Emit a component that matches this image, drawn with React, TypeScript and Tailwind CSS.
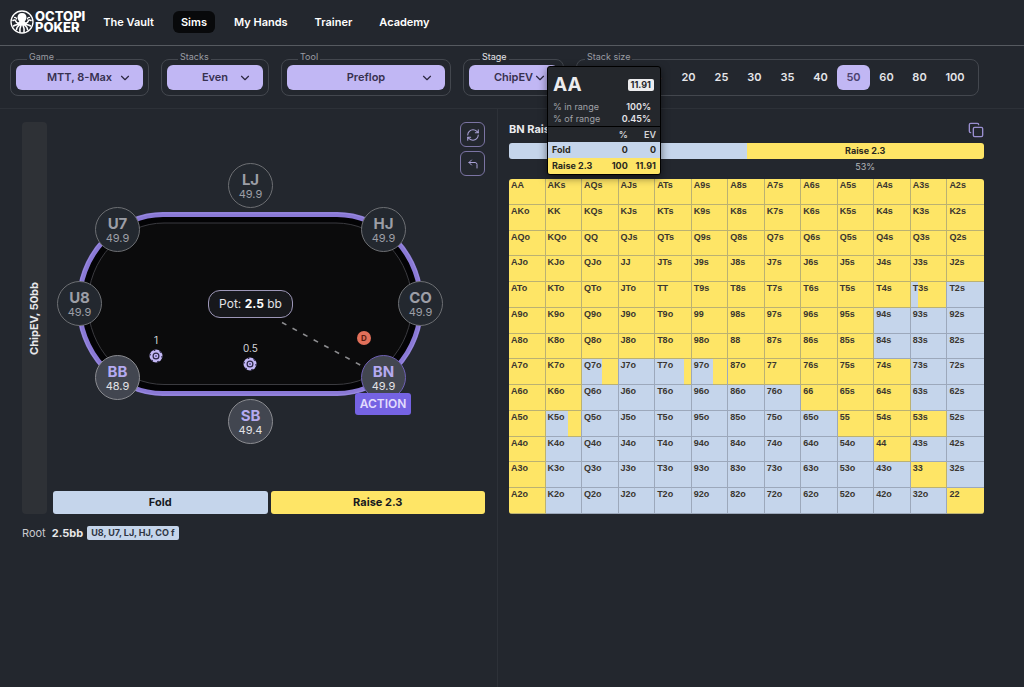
import { ChevronDown, Copy, CornerUpLeft, RefreshCw } from "lucide-react";

const RANKS = ["A", "K", "Q", "J", "T", "9", "8", "7", "6", "5", "4", "3", "2"];

const RAISE_COLOR = "#fee566";
const FOLD_COLOR = "#c5d5eb";

// "R" raises always, "F" folds always, "m" is looked up in MIXED_FOLD.
const STRATEGY = [
  "RRRRRRRRRRRRR",
  "RRRRRRRRRRRRR",
  "RRRRRRRRRRRRR",
  "RRRRRRRRRRRRR",
  "RRRRRRRRRRRmF",
  "RRRRRRRRRRFFF",
  "RRRRRRRRRRFFF",
  "RRmFmmRRRRRFF",
  "RRFFFFFFRRRFF",
  "RmFFFFFFFRRRF",
  "RFFFFFFFFFRFF",
  "RFFFFFFFFFFRF",
  "RFFFFFFFFFFFR",
];

const MIXED_FOLD: Record<string, number> = {
  T3s: 20,
  Q7o: 56,
  T7o: 81,
  "97o": 60,
  K5o: 62,
};

function handName(row: number, col: number) {
  if (row === col) return RANKS[row] + RANKS[col];
  return row < col ? `${RANKS[row]}${RANKS[col]}s` : `${RANKS[col]}${RANKS[row]}o`;
}

function cellBackground(row: number, col: number) {
  const action = STRATEGY[row][col];
  if (action === "R") return RAISE_COLOR;
  if (action === "F") return FOLD_COLOR;
  const fold = MIXED_FOLD[handName(row, col)];
  return `linear-gradient(to right, ${FOLD_COLOR} ${fold}%, ${RAISE_COLOR} ${fold}%)`;
}

function Logo() {
  return (
    <a href="#" className="flex items-center gap-px text-white" aria-label="Octopi Poker">
      <svg viewBox="0 0 48 48" className="size-6" fill="none" stroke="currentColor" strokeLinecap="round">
        <circle cx="24" cy="24" r="22" strokeWidth="2.6" />
        <path
          d="M24 6c-6 0-9 4.200-9 8.800 0 3.600 2.400 5.800 3.400 8.200.6 1.600.2 4 1.600 5.600h8c1.400-1.600 1-4 1.600-5.600 1-2.400 3.400-4.600 3.400-8.200C33 10.200 30 6 24 6z"
          fill="currentColor"
          stroke="none"
        />
        <path
          strokeWidth="3.200"
          d="M20 25c-3 2-7 1-8-2s-3-4-6-2M28 25c3 2 7 1 8-2s3-4 6-2M20 27c-4 3-9 2-13 5M28 27c4 3 9 2 13 5M21 28c-3 4-8 4-8 11M27 28c3 4 8 4 8 11M23 28c-1 5-5 8-3 16M25 28c1 5 5 8 3 16"
        />
        <path strokeWidth="2.400" d="M9 15c2-1 4 1 4 3M39 15c-2-1-4 1-4 3" />
      </svg>
      <span className="flex flex-col text-[13px] leading-[11px] font-extrabold">
        <span>OCTOPI</span>
        <span>POKER</span>
      </span>
    </a>
  );
}

const NAV = ["The Vault", "Sims", "My Hands", "Trainer", "Academy"];

function Header() {
  return (
    <header className="flex h-[46px] items-center gap-[10px] border-b border-[#565a60] px-[10px] pb-0.5">
      <Logo />
      <nav className="flex gap-[11px]">
        {NAV.map((item) => (
          <a
            key={item}
            href="#"
            className={
              item === "Sims"
                ? "rounded-md bg-[#08090b] px-2 text-[11px] leading-[22px] font-semibold text-white"
                : "rounded-md px-2 text-[11px] leading-[22px] font-semibold text-white"
            }
          >
            {item}
          </a>
        ))}
      </nav>
    </header>
  );
}

function Picker({ id, label, value, width, active }: { id: string; label: string; value: string; width: string; active?: boolean }) {
  return (
    <div className={`relative rounded-lg border border-[#43474e] p-[5px] ${width}`}>
      <label
        htmlFor={id}
        className={`absolute -top-[9px] left-4 bg-[#23272e] px-0.5 text-[9px] leading-3 ${active ? "text-[#e4e4e8]" : "text-[#9a9ca3]"}`}
      >
        {label}
      </label>
      <select
        id={id}
        className="block h-[25px] w-full appearance-none rounded-md bg-[#c1b7f4] text-center text-[11px] font-semibold text-[#37314f] [text-align-last:center]"
      >
        <option>{value}</option>
      </select>
      <ChevronDown className="pointer-events-none absolute top-[11px] right-4 size-3.5 text-[#2c2740]" />
    </div>
  );
}

const STACK_SIZES = [8, 10, 15, 20, 25, 30, 35, 40, 50, 60, 80, 100];

function Filters() {
  return (
    <div className="flex gap-3 border-b border-[#2d3138] px-[10px] pt-[13px] pb-3">
      <Picker id="game" label="Game" value="MTT, 8-Max" width="w-[139px]" />
      <Picker id="stacks" label="Stacks" value="Even" width="w-[108px]" />
      <Picker id="tool" label="Tool" value="Preflop" width="w-[170px]" />
      <Picker id="stage" label="Stage" value="ChipEV" width="w-[101px]" active />
      <div role="group" aria-labelledby="stack-size" className="relative flex rounded-lg border border-[#43474e] p-[5px] pr-1">
        <span id="stack-size" className="absolute -top-[9px] left-2 bg-[#23272e] px-0.5 text-[9px] leading-3 text-[#9a9ca3]">
          Stack size
        </span>
        {STACK_SIZES.map((size) => (
          <button
            key={size}
            type="button"
            aria-pressed={size === 50}
            className={
              size === 50
                ? "h-[25px] w-[33px] rounded-md bg-[#c1b7f4] text-[11px] font-semibold text-[#4b4270]"
                : size === 8
                  ? "h-[25px] w-6 text-[11px] font-semibold text-[#e6e6ea]"
                  : size === 100
                    ? "h-[25px] w-[38px] text-[11px] font-semibold text-[#e6e6ea]"
                    : "h-[25px] w-[33px] text-[11px] font-semibold text-[#e6e6ea]"
            }
          >
            {size}
          </button>
        ))}
      </div>
    </div>
  );
}

type SeatInfo = { name: string; stack: string; place: string; state: "folded" | "live" | "acting" };

const SEATS: SeatInfo[] = [
  { name: "LJ", stack: "49.9", place: "left-[171px] top-[1px]", state: "folded" },
  { name: "HJ", stack: "49.9", place: "left-[304px] top-[45px]", state: "folded" },
  { name: "CO", stack: "49.9", place: "left-[341px] top-[119px]", state: "folded" },
  { name: "BN", stack: "49.9", place: "left-[304px] top-[193px]", state: "acting" },
  { name: "SB", stack: "49.4", place: "left-[171px] top-[237px]", state: "live" },
  { name: "BB", stack: "48.9", place: "left-[38px] top-[193px]", state: "live" },
  { name: "U8", stack: "49.9", place: "left-0 top-[119px]", state: "folded" },
  { name: "U7", stack: "49.9", place: "left-[38px] top-[45px]", state: "folded" },
];

const SEAT_STYLE = {
  folded: "border-[#6d6f73] bg-[#23282f] text-[#9c9ea6]",
  live: "border-[#8b8c91] bg-[#424650] text-[#e2e2e6]",
  acting: "border-[#6e60b4] bg-[#424650] text-[#e2e2e6]",
};

function Seat({ seat }: { seat: SeatInfo }) {
  return (
    <div className={`absolute flex size-[45px] flex-col items-center justify-center rounded-full border ${seat.place} ${SEAT_STYLE[seat.state]}`}>
      <span className={`text-[15px] leading-4 font-bold ${seat.state === "folded" ? "" : "text-[#b5aaf0]"}`}>{seat.name}</span>
      <span className="text-[11px] leading-3">{seat.stack}</span>
    </div>
  );
}

function Chip() {
  return (
    <svg viewBox="0 0 28 28" className="size-3.5">
      <circle cx="14" cy="14" r="13" fill="#c3b8f5" />
      <circle cx="14" cy="14" r="12" fill="none" stroke="#2b2545" strokeWidth="2.400" strokeDasharray="3.400 9.160" />
      <circle cx="14" cy="14" r="5.800" fill="#c3b8f5" stroke="#2b2545" strokeWidth="2.400" />
      <circle cx="14" cy="14" r="2.200" fill="#6c5fa8" />
    </svg>
  );
}

function PokerTable() {
  return (
    <div className="relative h-[284px] w-[387px]">
      <svg viewBox="0 0 387 284" className="absolute inset-0 size-full" fill="none">
        <rect x="22" y="52.500" width="342" height="179" rx="84" ry="89.500" fill="#030305" stroke="#8a79d6" strokeWidth="5" />
        <rect x="20.500" y="51" width="345" height="182" rx="85.500" ry="91" stroke="#a497e6" strokeOpacity=".6" />
        <rect x="31" y="61" width="324" height="161.500" rx="76" ry="80.700" fill="#0b0b0c" stroke="#3b3b40" />
        <path d="M225 160.500 305 204" stroke="#8d8d90" strokeWidth="1.600" strokeDasharray="5 7" />
      </svg>
      {SEATS.map((seat) => (
        <Seat key={seat.name} seat={seat} />
      ))}
      <div className="absolute top-[128px] left-[151px] flex h-7 w-[85px] items-center justify-center rounded-[12px] border border-[#9d97b8] bg-[#17181c] text-[12px] text-[#e2e2e6]">
        <span>
          Pot: <b className="font-bold text-white">2.5</b> bb
        </span>
      </div>
      <div className="absolute top-[172px] left-[92px] flex flex-col items-center gap-[3px] text-[10px] leading-3 text-[#d6d6da]">
        <span>1</span>
        <Chip />
      </div>
      <div className="absolute top-[180px] left-[186px] flex flex-col items-center gap-[3px] text-[10px] leading-3 text-[#d6d6da]">
        <span>0.5</span>
        <Chip />
      </div>
      <div className="absolute top-[169px] left-[300px] flex size-3.5 items-center justify-center rounded-full bg-[#e2705a] text-[8px] font-bold text-[#5a1d12]">
        D
      </div>
      <div className="absolute top-[231px] left-[298px] flex h-[22px] w-14 items-center justify-center rounded-[3px] bg-[#7563e3] text-[12px] font-semibold text-[#e2dcfd]">
        ACTION
      </div>
    </div>
  );
}

function TablePanel() {
  return (
    <section className="border-r border-[#2d3138] pt-[13px] pr-3 pl-[22px]">
      <div className="flex gap-1.5">
        <div className="flex w-[25px] items-center justify-center rounded-sm bg-[#2e3136]">
          <span className="rotate-180 text-[11px] font-bold text-[#e8e8ea] [writing-mode:vertical-rl]">ChipEV, 50bb</span>
        </div>
        <div className="flex flex-1 flex-col gap-1">
          <div className="flex h-[365px] gap-3">
            <div className="flex flex-1 justify-center pt-10">
              <PokerTable />
            </div>
            <div className="flex flex-col gap-1">
              <button type="button" aria-label="Reset hand" className="flex size-[25px] items-center justify-center rounded-md border border-[#7b74a3] text-[#a9a1d6]">
                <RefreshCw className="size-3.5" strokeWidth={1.8} />
              </button>
              <button type="button" aria-label="Step back" className="flex size-[25px] items-center justify-center rounded-md border border-[#7b74a3] text-[#a9a1d6]">
                <CornerUpLeft className="size-3" strokeWidth={2} />
              </button>
            </div>
          </div>
          <div className="grid grid-cols-2 gap-[3px] text-[11px] font-bold text-[#17191f]">
            <button type="button" className="h-[23px] rounded-[3px] bg-[#c5d5eb]">
              Fold
            </button>
            <button type="button" className="h-[23px] rounded-[3px] bg-[#fee566]">
              Raise 2.3
            </button>
          </div>
        </div>
      </div>
      <div className="flex items-center pt-3 text-[11px] leading-[14px]">
        <span className="mr-1.5 text-[#c9cace]">Root</span>
        <span className="mr-1 font-bold text-[#e8e8ea]">2.5bb</span>
        <a href="#" className="rounded-xs bg-[#c5d5eb] px-1 text-[9px] font-bold text-[#2d3442]">
          U8, U7, LJ, HJ, CO f
        </a>
      </div>
    </section>
  );
}

function HandTooltip() {
  return (
    <div
      role="tooltip"
      className="absolute bottom-full left-[38px] z-10 mb-1 w-[114px] overflow-hidden rounded-[3px] border border-black bg-[#24272c] text-[9px] shadow-[0_3px_8px_rgba(0,0,0,0.5)]"
    >
      <div className="flex items-center justify-between pt-[5px] pr-1.5 pl-[5px]">
        <span className="text-[19px] leading-[26px] font-bold text-[#ececee]">AA</span>
        <span className="rounded-[2px] bg-[#ececee] px-[3px] leading-3 font-bold text-[#24272c]">11.91</span>
      </div>
      <dl className="border-b border-black pt-[3px] pr-[9px] pb-px pl-[5px]">
        <div className="flex justify-between leading-3">
          <dt className="text-[#a0a2a8]">% in range</dt>
          <dd className="font-semibold text-[#e4e4e8]">100%</dd>
        </div>
        <div className="flex justify-between leading-3">
          <dt className="text-[#a0a2a8]">% of range</dt>
          <dd className="font-semibold text-[#e4e4e8]">0.45%</dd>
        </div>
      </dl>
      <table className="w-full border-collapse text-right font-bold text-[#2a2820]">
        <thead>
          <tr className="h-[15px] text-[#d4d4d8]">
            <th className="p-0" aria-label="Action" />
            <th className="p-0 font-semibold">%</th>
            <th className="p-0 pr-1 font-semibold">EV</th>
          </tr>
        </thead>
        <tbody>
          <tr className="h-4 bg-[#c5d5eb]">
            <th className="p-0 pl-1 text-left">Fold</th>
            <td className="p-0">0</td>
            <td className="p-0 pr-1">0</td>
          </tr>
          <tr className="h-4 bg-[#fee566]">
            <th className="p-0 pl-1 text-left">Raise 2.3</th>
            <td className="p-0">100</td>
            <td className="p-0 pr-1">11.91</td>
          </tr>
        </tbody>
      </table>
    </div>
  );
}

function HandMatrix() {
  return (
    <div className="relative">
      <div className="overflow-hidden rounded-[3px]">
        <table className="h-[335px] w-full table-fixed border-separate border-spacing-0">
          <tbody>
            {RANKS.map((rank, row) => (
              <tr key={rank}>
                {RANKS.map((other, col) => (
                  <td
                    key={other}
                    className="border-r border-b border-[#6b7280]/45 p-0 pl-0.5 align-top font-['Liberation_Sans',Arial,sans-serif] text-[9px] leading-3 font-bold text-[#3a3630] last:border-r-0"
                    style={{ background: cellBackground(row, col) }}
                  >
                    {handName(row, col)}
                  </td>
                ))}
              </tr>
            ))}
          </tbody>
        </table>
      </div>
      <HandTooltip />
    </div>
  );
}

function RangePanel() {
  return (
    <section className="pt-[13px] pr-10 pl-[11px]">
      <div className="flex h-[21px] items-start justify-between">
        <h2 className="text-[11px] leading-[14px] font-bold text-[#ececee]">BN Raise</h2>
        <button type="button" aria-label="Copy range" className="text-[#9a8fd0]">
          <Copy className="size-4" />
        </button>
      </div>
      <div className="grid grid-cols-2 pb-1 text-center text-[9px] leading-4 font-bold text-[#2a2820]">
        <div className="rounded-l-[3px] bg-[#c5d5eb]" />
        <div className="rounded-r-[3px] bg-[#fee566]">Raise 2.3</div>
        <div className="col-start-2 font-normal text-[#b4b6bb]">53%</div>
      </div>
      <HandMatrix />
    </section>
  );
}

export default function App() {
  return (
    <div className="flex min-h-screen flex-col bg-[#23272e] font-[Inter,sans-serif] text-white">
      <Header />
      <Filters />
      <main className="grid flex-1 grid-cols-[minmax(0,498fr)_minmax(0,526fr)]">
        <TablePanel />
        <RangePanel />
      </main>
    </div>
  );
}
